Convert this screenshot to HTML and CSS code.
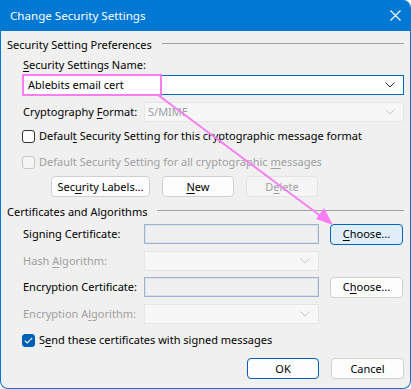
FILE: index.html
```html
<!DOCTYPE html>
<html>
<head>
<meta charset="utf-8">
<link rel="stylesheet" href="styles.css">
</head>
<body>
<div class="window">
  <div class="titlebar">
    <span class="title">Change Security Settings</span>
    <svg class="close" width="11" height="11" viewBox="0 0 11 11"><path d="M0.5 0.5 L10.5 10.5 M10.5 0.5 L0.5 10.5" stroke="#fff" stroke-width="1.1" fill="none"/></svg>
  </div>
  <div class="content">
    <div class="group g1"><span>Security Setting Preferences</span><div class="rule"></div></div>
    <div class="row label-only l-name"><span><u>S</u>ecurity Settings Name:</span></div>
    <div class="row combo focused r-name">
      <span class="val">Ablebits email cert</span>
      <svg class="chev" width="10" height="6" viewBox="0 0 10 6"><path d="M0.5 0.5 L5 5 L9.5 0.5" stroke="#333" stroke-width="1" fill="none"/></svg>
    </div>
    <div class="row field-row r-crypto">
      <span class="lbl">Cryptography <u>F</u>ormat:</span>
      <div class="combo disabled wide"><span class="val">S/MIME</span>
        <svg class="chev" width="10" height="6" viewBox="0 0 10 6"><path d="M0.5 0.5 L5 5 L9.5 0.5" stroke="#c4c4c4" stroke-width="1" fill="none"/></svg>
      </div>
    </div>
    <div class="row check-row r-cb1"><span class="box"></span><span>Defaul<u>t</u> Security Setting for this cryptographic message format</span></div>
    <div class="row check-row dis r-cb2"><span class="box"></span><span>Default Security Setting for all cryptographic <u>m</u>essages</span></div>
    <div class="row btn-row r-btns">
      <button class="btn w99">Sec<u>u</u>rity Labels...</button>
      <button class="btn w72"><u>N</u>ew</button>
      <button class="btn w72 disabled-btn">D<u>e</u>lete</button>
    </div>
    <div class="group g2"><span>Certificates and Algorithms</span><div class="rule"></div></div>
    <div class="row field-row r-sign">
      <span class="lbl">Signing Certificate:</span>
      <div class="textbox"></div>
      <button class="btn w73 hot"><u>C</u>hoose...</button>
    </div>
    <div class="row field-row r-hash">
      <span class="lbl grey">Hash <u>A</u>lgorithm:</span>
      <div class="combo disabled short"><svg class="chev" width="10" height="6" viewBox="0 0 10 6"><path d="M0.5 0.5 L5 5 L9.5 0.5" stroke="#c4c4c4" stroke-width="1" fill="none"/></svg></div>
    </div>
    <div class="row field-row r-enc">
      <span class="lbl">Encryption Certificate:</span>
      <div class="textbox"></div>
      <button class="btn w73">C<u>h</u>oose...</button>
    </div>
    <div class="row field-row r-encalg">
      <span class="lbl grey">Encryption A<u>l</u>gorithm:</span>
      <div class="combo disabled short"><svg class="chev" width="10" height="6" viewBox="0 0 10 6"><path d="M0.5 0.5 L5 5 L9.5 0.5" stroke="#c4c4c4" stroke-width="1" fill="none"/></svg></div>
    </div>
    <div class="row check-row r-cb3"><span class="box checked"><svg width="9" height="7" viewBox="0 0 9 7"><path d="M0.8 3.6 L3.2 6 L8.2 0.8" stroke="#fff" stroke-width="1.1" fill="none"/></svg></span><span>S<u>e</u>nd these certificates with signed messages</span></div>
    <div class="row footer">
      <button class="btn w72 default">OK</button>
      <button class="btn w73">Cancel</button>
    </div>
  </div>
  <svg class="annot" width="411" height="389" viewBox="0 0 411 389">
    <rect x="23" y="75" width="138" height="20" fill="none" stroke="#f77ef2" stroke-width="2"/>
    <line x1="158" y1="95" x2="322" y2="217" stroke="#f77ef2" stroke-width="2"/>
    <polygon points="333,225 316,219 324,208" fill="#f77ef2"/>
  </svg>
</div>
</body>
</html>
```
FILE: styles.css
```css
html, body {
  margin: 0;
  padding: 0;
  background: #ffffff;
}
body {
  font-family: "Noto Sans", "Open Sans", sans-serif;
  font-size: 11px;
  color: #000;
  white-space: nowrap;
}
.window {
  position: relative;
  width: 411px;
  height: 389px;
  box-sizing: border-box;
  border: 1px solid #0078d4;
  border-top: none;
  border-radius: 0 8px 8px 8px;
  background: #f0f0f0;
  overflow: hidden;
}
.titlebar {
  height: 31px;
  background: #0078d4;
  color: #fff;
  display: flex;
  align-items: center;
  justify-content: space-between;
  padding: 0 10px 0 10px;
  margin: 0 -1px;
}
.title {
  font-size: 11.6px;
  line-height: 14px;
  padding-top: 1px;
}
.close {
  margin-right: 0px;
}
.content {
  padding: 0 6px;
  display: flex;
  flex-direction: column;
}
.group {
  display: flex;
  align-items: center;
  height: 14px;
  line-height: 14px;
  gap: 10px;
}
.group .rule {
  flex: 1;
  height: 1px;
  background: #a0a0a0;
  margin-top: -3px;
}
.g1 { margin-top: 7px; }
.g2 { margin-top: 8px; }
.row {
  margin-left: 15px;
  display: flex;
  align-items: center;
}
.label-only {
  height: 14px;
  line-height: 14px;
  padding-left: 1px;
}
.l-name { margin-top: 6px; }
.combo {
  box-sizing: border-box;
  height: 20px;
  border: 1px solid #c8c8c8;
  background: #fff;
  display: flex;
  align-items: center;
  justify-content: space-between;
  padding: 0 8px 0 5px;
}
.combo.focused {
  border-color: #0067c0;
}
.r-name { margin-top: 3px; }
.combo.disabled {
  background: #f7f7f7;
  border-color: #e6e6e6;
  color: #a0a0a0;
  padding-left: 3px;
}
.combo.wide { width: 260px; }
.combo.short { width: 175px; justify-content: flex-end; }
.val { line-height: 14px; }
.field-row { height: 20px; }
.lbl {
  width: 122px;
  padding-left: 1px;
  box-sizing: border-box;
  line-height: 14px;
  flex: none;
}
.grey { color: #a0a0a0; }
.r-crypto { margin-top: 7px; }
.check-row {
  height: 14px;
  line-height: 14px;
  gap: 4px;
}
.box {
  box-sizing: border-box;
  width: 13px;
  height: 13px;
  border: 1px solid #333;
  border-radius: 3px;
  background: #fff;
  flex: none;
  display: flex;
  align-items: center;
  justify-content: center;
}
.dis { color: #a0a0a0; }
.dis .box {
  border-color: #c6c6c6;
  background: #f5f5f5;
}
.box.checked {
  background: #005fb8;
  border-color: #005fb8;
}
.r-cb1 { margin-top: 7px; }
.r-cb2 { margin-top: 12px; }
.r-cb3 { margin-top: 9px; }
.btn {
  box-sizing: border-box;
  height: 21px;
  border: 1px solid #d0d0d0;
  border-radius: 4px;
  background: #fdfdfd;
  font-family: inherit;
  font-size: 11px;
  color: #000;
  padding: 0;
  line-height: 14px;
  flex: none;
}
.w99 { width: 99px; }
.w72 { width: 72px; }
.w73 { width: 73px; }
.btn-row {
  margin-top: 7px;
  gap: 12px;
  padding-left: 29px;
}
.disabled-btn {
  background: #f5f5f5;
  border-color: #e3e3e3;
  color: #a0a0a0;
}
.textbox {
  box-sizing: border-box;
  width: 175px;
  height: 20px;
  border: 1px solid #9fb3cf;
  box-shadow: inset 0 0 0 1px #d8e1ec;
  background: #f0f0f0;
  flex: none;
}
.field-row .btn { margin-left: 11px; }
.hot {
  background: #e0eef9;
  border-color: #0067c0;
}
.r-sign { margin-top: 5px; }
.r-hash { margin-top: 7px; }
.r-enc { margin-top: 6px; }
.r-encalg { margin-top: 7px; }
.footer {
  margin-top: 11px;
  justify-content: flex-end;
  gap: 12px;
}
.default {
  border-color: #005fb8;
}
.annot {
  position: absolute;
  left: -1px;
  top: 0;
  pointer-events: none;
}
u { text-decoration-thickness: 1px; text-underline-offset: 2px; }
```
